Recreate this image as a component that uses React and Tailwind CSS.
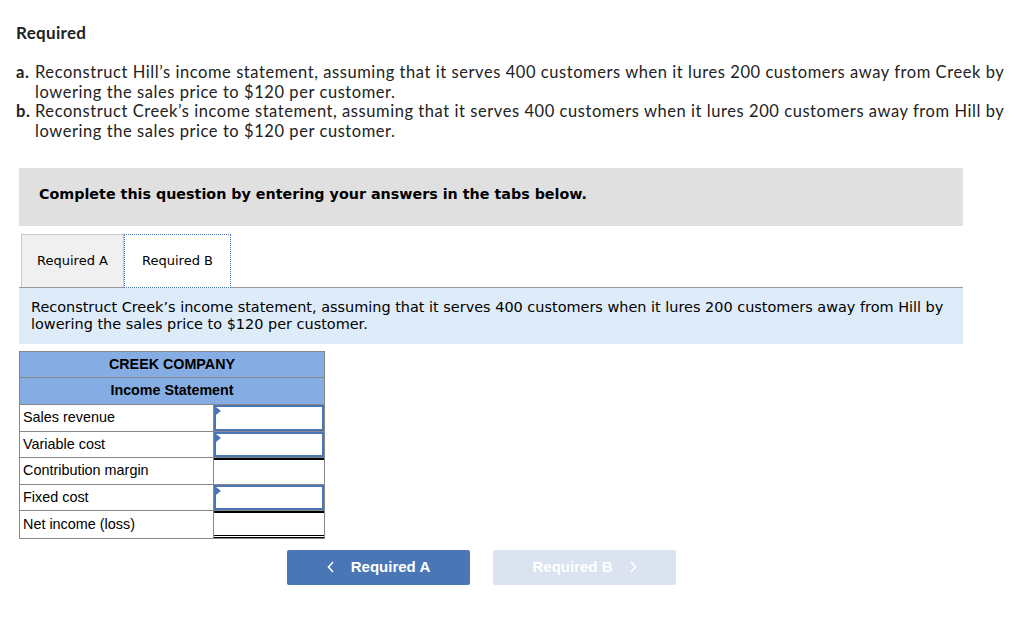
import React from 'react'

const rows = [
  { label: 'Sales revenue', input: true },
  { label: 'Variable cost', input: true },
  { label: 'Contribution margin', input: false, top: true },
  { label: 'Fixed cost', input: true },
  { label: 'Net income (loss)', input: false, top: true, dbl: true },
]

function Cell({ input, top, dbl }) {
  if (input) {
    return (
      <div className="relative h-full border-2 border-[#4a76b5] bg-white">
        <span className="absolute left-0 top-0 w-0 h-0 border-y-[4px] border-y-transparent border-l-[5px] border-l-[#4a76b5]" />
      </div>
    )
  }
  return (
    <div className={`h-full bg-white ${top ? 'border-t-2 border-black' : ''} ${dbl ? 'border-b-[3px] border-double border-b-black' : ''}`} />
  )
}

export default function App() {
  return (
    <div className="w-[1024px] h-[626px] bg-white text-[#222]" style={{ fontFamily: 'Lato, "Open Sans", sans-serif' }}>
      <div className="pl-4 pt-[22px]">
        <h2 className="text-[17px] font-bold leading-[22px] tracking-[0.3px]">Required</h2>
        <ol className="mt-[19px] text-[16.5px] leading-[19.5px] tracking-[0.56px] pr-3">
          <li className="flex">
            <span className="font-bold w-[19px] shrink-0">a.</span>
            <span>Reconstruct Hill’s income statement, assuming that it serves 400 customers when it lures 200 customers away from Creek by lowering the sales price to $120 per customer.</span>
          </li>
          <li className="flex">
            <span className="font-bold w-[19px] shrink-0">b.</span>
            <span>Reconstruct Creek’s income statement, assuming that it serves 400 customers when it lures 200 customers away from Hill by lowering the sales price to $120 per customer.</span>
          </li>
        </ol>
      </div>

      <div className="ml-[19px] w-[944px]" style={{ fontFamily: '"DejaVu Sans", Verdana, sans-serif' }}>
        <div className="mt-[27px] h-[58px] bg-[#e0e0e0] flex items-center px-5">
          <span className="text-[14.3px] font-bold text-black -mt-[4px]">Complete this question by entering your answers in the tabs below.</span>
        </div>

        <div className="mt-2 flex items-end h-[54px] border-b border-[#999] pl-[2px]">
          <div className="h-[53px] w-[103px] bg-[#f0f0f0] border border-b-0 border-[#c8c8c8] flex items-center justify-center text-[13px] text-black">
            Required A
          </div>
          <div className="h-[54px] w-[107px] bg-white border border-dotted border-[#4a76b5] -mb-px flex items-center justify-center text-[13px] text-black">
            Required B
          </div>
        </div>

        <div className="h-[56px] bg-[#deebf8] px-3 pt-[11px] text-[14.45px] leading-[17px] text-black">
          Reconstruct Creek’s income statement, assuming that it serves 400 customers when it lures 200 customers away from Hill by lowering the sales price to $120 per customer.
        </div>

        <div className="mt-[7px] w-[306px] border border-[#888] text-black" style={{ fontFamily: '"Liberation Sans", Arial, sans-serif' }}>
          <div className="h-[26px] bg-[#85ade3] border-b border-[#888] flex items-center justify-center text-[14.3px] font-bold">CREEK COMPANY</div>
          <div className="h-[27px] bg-[#85ade3] border-b border-[#888] flex items-center justify-center text-[14.3px] font-bold">Income Statement</div>
          {rows.map((r, i) => (
            <div key={r.label} className={`flex h-[26.6px] ${i < rows.length - 1 ? 'border-b border-[#888]' : ''}`}>
              <div className="w-[194px] border-r border-[#888] flex items-center px-[3px] text-[14.4px]">{r.label}</div>
              <div className="flex-1">
                <Cell input={r.input} top={r.top} dbl={r.dbl} />
              </div>
            </div>
          ))}
        </div>

        <div className="mt-[11px] flex gap-[23px] pl-[268px]" style={{ fontFamily: '"Liberation Sans", Arial, sans-serif' }}>
          <button className="w-[183px] h-[35px] rounded-[2px] bg-[#4a76b5] text-white text-[15px] font-bold flex items-center justify-center gap-4">
            <svg width="8" height="12" viewBox="0 0 8 12"><path d="M6 1L1.5 6L6 11" stroke="white" strokeWidth="1.6" fill="none" /></svg>
            Required A
          </button>
          <button className="w-[183px] h-[35px] rounded-[2px] bg-[#dae3ef] text-white text-[15px] font-bold flex items-center justify-center gap-4">
            Required B
            <svg width="8" height="12" viewBox="0 0 8 12"><path d="M2 1L6.5 6L2 11" stroke="white" strokeWidth="1.6" fill="none" /></svg>
          </button>
        </div>
      </div>
    </div>
  )
}
